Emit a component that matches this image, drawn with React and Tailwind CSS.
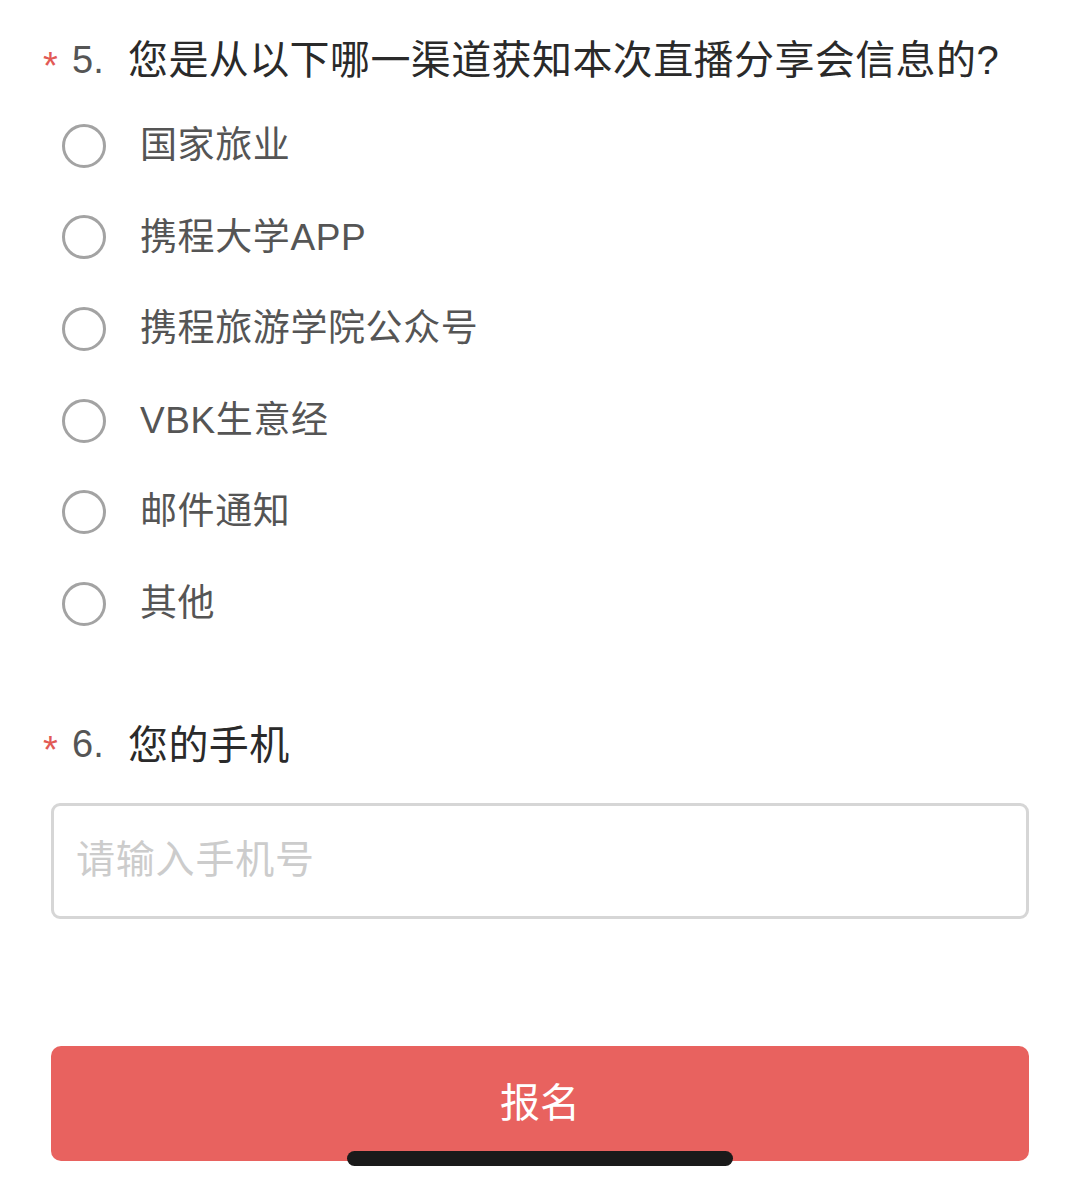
import React from 'react';

const options = ['国家旅业', '携程大学APP', '携程旅游学院公众号', 'VBK生意经', '邮件通知', '其他'];

const font = { fontFamily: '"Liberation Sans", "Noto Sans CJK SC", sans-serif' };

// Question title with required mark
const Question = ({ num, title }) => (
  <div className="flex items-center h-[60px] pl-[43px]">
    <span className="text-[38px] text-[#e25a55] w-[29px] mt-[12px]">*</span>
    <span className="text-[38px] text-[#555] w-[56px]">{num}.</span>
    <span className="text-[40px] text-[#2a2a2a] tracking-[0.4px]">{title}</span>
  </div>
);

export default function App() {
  return (
    <div className="relative w-[1080px] h-[1189px] bg-white overflow-hidden" style={font}>
      <div className="pt-[30px]">
        <Question num="5" title="您是从以下哪一渠道获知本次直播分享会信息的?" />
      </div>

      {/* Options */}
      <div className="mt-[10px] flex flex-col">
        {options.map((opt) => (
          <div key={opt} className="flex items-center h-[91.6px] pl-[62px]">
            <div className="w-[44px] h-[44px] rounded-full border-[3px] border-[#a3a3a3] shrink-0" />
            <span className="ml-[34px] text-[37px] text-[#555] tracking-[0.6px]">{opt}</span>
          </div>
        ))}
      </div>

      <div className="mt-[65px]">
        <Question num="6" title="您的手机" />
      </div>

      {/* Phone input */}
      <div className="mt-[28px] mx-[51px] h-[116px] border-[3px] border-[#d6d6d6] rounded-[9px] flex items-center px-[22px]">
        <span className="text-[39px] text-[#cccccc] tracking-[0.8px]">请输入手机号</span>
      </div>

      {/* Submit button */}
      <div className="mt-[127px] mx-[51px] h-[115px] rounded-[10px] bg-[#e8625f] flex items-center justify-center">
        <span className="text-[40px] text-white">报名</span>
      </div>

      {/* Home indicator */}
      <div className="absolute left-[347px] top-[1151px] w-[386px] h-[15px] rounded-full bg-[#1a1a1a]" />
    </div>
  );
}
